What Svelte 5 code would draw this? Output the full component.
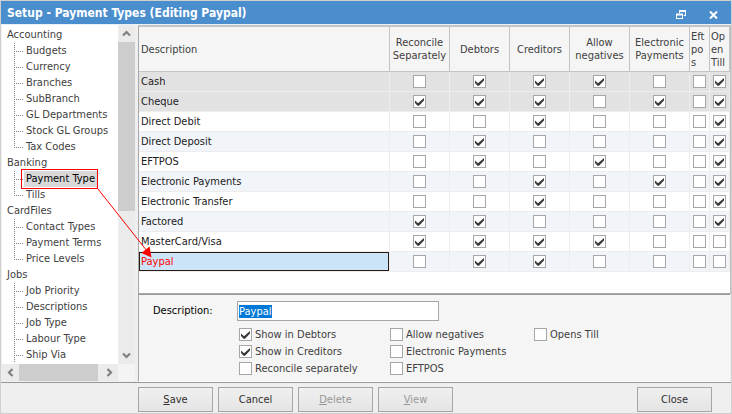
<script>
  import { onMount } from 'svelte';

  const tree = [
    { name: 'Accounting', items: ['Budgets', 'Currency', 'Branches', 'SubBranch', 'GL Departments', 'Stock GL Groups', 'Tax Codes'] },
    { name: 'Banking', items: ['Payment Type', 'Tills'] },
    { name: 'CardFiles', items: ['Contact Types', 'Payment Terms', 'Price Levels'] },
    { name: 'Jobs', more: true, items: ['Job Priority', 'Descriptions', 'Job Type', 'Labour Type', 'Ship Via'] }
  ];
  const columns = ['Reconcile Separately', 'Debtors', 'Creditors', 'Allow negatives', 'Electronic Payments', 'Eft pos', 'Open Till'];
  const rows = $state([
    { name: 'Cash', system: true, flags: [false, true, true, true, false, false, true] },
    { name: 'Cheque', system: true, flags: [true, true, true, false, true, false, true] },
    { name: 'Direct Debit', flags: [false, false, true, false, false, false, true] },
    { name: 'Direct Deposit', flags: [false, true, false, false, false, false, true] },
    { name: 'EFTPOS', flags: [false, true, false, true, false, false, true] },
    { name: 'Electronic Payments', flags: [false, false, true, false, true, false, true] },
    { name: 'Electronic Transfer', flags: [false, false, true, false, false, false, true] },
    { name: 'Factored', flags: [true, true, false, false, false, false, true] },
    { name: 'MasterCard/Visa', flags: [true, true, true, true, false, false, false] },
    { name: 'Paypal', flags: [false, true, true, false, false, false, false] }
  ]);
  const options = $state([
    { label: 'Show in Debtors', on: true },
    { label: 'Allow negatives', on: false },
    { label: 'Opens Till', on: false },
    { label: 'Show in Creditors', on: true },
    { label: 'Electronic Payments', on: false, last: true },
    { label: 'Reconcile separately', on: false },
    { label: 'EFTPOS', on: false }
  ]);
  let selected = $state('Paypal');
  let description = $state('Paypal');
  let field;
  onMount(() => {
    field.focus();
    field.select();
  });
</script>

{#snippet chevron(d)}
  <svg width="9" height="9" viewBox="0 0 9 9" aria-hidden="true"><path {d} fill="none" stroke="#808080" stroke-width="2.2" /></svg>
{/snippet}

<div class="window">
  <header>
    <h1>Setup - Payment Types (Editing Paypal)</h1>
    <button class="tool" aria-label="Restore">
      <svg width="10" height="9" viewBox="0 0 10 9"><path d="M3 0H10V6H7.700V5H9V2H4V3H3ZM0 3.500H7V9H0ZM1 5.500V8H6V5.500Z" fill="#fff" fill-rule="evenodd" /></svg>
    </button>
    <button class="tool" aria-label="Close window">
      <svg width="9" height="8" viewBox="0 0 9 8"><path d="M1 .5L8 7.5M8 .5L1 7.5" stroke="#fff" stroke-width="2" /></svg>
    </button>
  </header>

  <main>
    <nav>
      <div class="tree-row">
        <div class="tree">
          {#each tree as group}
            <div class="group">{group.name}</div>
            <ul class:more={group.more}>
              {#each group.items as item}
                <li><a href="#top" class:current={item === 'Payment Type'}>{item}</a></li>
              {/each}
            </ul>
          {/each}
        </div>
        <div class="vbar">
          <button aria-label="Scroll up">{@render chevron('M1 6.5L4.5 3L8 6.5')}</button>
          <div class="thumb"></div>
          <div class="rest"></div>
          <button aria-label="Scroll down">{@render chevron('M1 2.5L4.5 6L8 2.5')}</button>
        </div>
      </div>
      <div class="hbar">
        <button aria-label="Scroll left">{@render chevron('M6.5 1L3 4.5L6.5 8')}</button>
        <div class="thumb"></div>
        <button aria-label="Scroll right">{@render chevron('M2.5 1L6 4.5L2.5 8')}</button>
        <div class="corner"></div>
      </div>
    </nav>

    <div class="content">
      <div class="grid">
        <table>
          <colgroup>
            <col />
            {#each columns as c, i}<col class={i > 4 ? 'narrow' : 'wide'} />{/each}
          </colgroup>
          <thead>
            <tr>
              <th class="desc" scope="col">Description</th>
              {#each columns as c, i}<th scope="col" class:tight={i > 4}>{c}</th>{/each}
            </tr>
          </thead>
          <tbody>
            {#each rows as row}
              <tr class:system={row.system} class:selected={row.name === selected}>
                <td class="desc">{row.name}</td>
                {#each columns as c, i}
                  <td><input type="checkbox" aria-label={`${row.name}: ${c}`} bind:checked={row.flags[i]} /></td>
                {/each}
              </tr>
            {/each}
          </tbody>
        </table>
      </div>

      <form>
        <div class="field">
          <label for="description">Description:</label>
          <input id="description" type="text" bind:this={field} bind:value={description} />
        </div>
        <div class="options">
          {#each options as o}
            <label class:last={o.last}><input type="checkbox" bind:checked={o.on} />{o.label}</label>
          {/each}
        </div>
      </form>
    </div>

    <svg class="callout" width="160" height="240" viewBox="0 0 160 240" aria-hidden="true">
      <rect x="21.5" y="144.5" width="76" height="19" fill="none" stroke="#f00" />
      <path d="M98 164L147 226" stroke="#f00" stroke-width="1" />
      <path d="M151.500 232.500L149.500 221.500L141.500 228Z" fill="#f00" />
    </svg>
  </main>

  <footer>
    <button><u>S</u>ave</button>
    <button>Cancel</button>
    <button disabled><u>D</u>elete</button>
    <button disabled><u>V</u>iew</button>
    <button class="close">Close</button>
  </footer>
</div>

<style>
  :global(body) {
    background: #efefef;
  }
  .window {
    box-sizing: border-box;
    min-width: 640px;
    height: 100vh;
    display: flex;
    flex-direction: column;
    border: 1px solid #cfcfcf;
    background: #efefef;
    color: #404040;
    font: 11px/16px Tahoma, 'DejaVu Sans Condensed', 'DejaVu Sans', sans-serif;
  }
  button, input {
    font: inherit;
    color: inherit;
  }
  header {
    height: 23px;
    flex: none;
    display: flex;
    align-items: center;
    gap: 16px;
    padding: 0 10px 0 6px;
    background: #4b8ecd;
    border-bottom: 1px solid #e8f0f8;
    color: #fff;
  }
  h1 {
    flex: 1;
    margin: 0;
    font-size: 12px;
    line-height: 24px;
    white-space: nowrap;
  }
  .tool {
    width: 16px;
    height: 16px;
    margin-top: 4px;
    padding: 0;
    display: grid;
    place-items: center;
    border: 0;
    background: none;
  }
  main {
    position: relative;
    flex: 1;
    min-height: 0;
    display: flex;
    gap: 3px;
    padding-left: 1px;
  }
  nav {
    width: 133px;
    flex: none;
    display: flex;
    flex-direction: column;
    margin-bottom: 1px;
    background: #fff;
  }
  .tree-row {
    flex: 1;
    min-height: 0;
    display: flex;
  }
  .tree {
    flex: 1;
    overflow: hidden;
    padding: 2px 0 0 5px;
    white-space: nowrap;
  }
  ul {
    margin: 0;
    padding: 0;
    list-style: none;
  }
  li {
    height: 16px;
    padding-left: 10px;
    margin-left: 7px;
    background:
      repeating-linear-gradient(180deg, #808080 0 1px, transparent 1px 2px) 0 0 / 1px 100% no-repeat,
      repeating-linear-gradient(90deg, #808080 0 1px, transparent 1px 2px) 0 8px / 9px 1px no-repeat;
  }
  li:last-child {
    background-size: 1px 9px, 9px 1px;
  }
  .more li:last-child {
    background-size: 1px 100%, 9px 1px;
  }
  .more {
    padding-bottom: 16px;
  }
  a {
    display: inline-block;
    padding: 0 2px;
    color: inherit;
    text-decoration: none;
  }
  a.current {
    background: #d9d9d9;
    color: #000;
  }
  .vbar, .hbar {
    display: flex;
    background: #ebebeb;
  }
  .vbar {
    width: 17px;
    flex-direction: column;
  }
  .hbar {
    height: 17px;
    flex: none;
  }
  .vbar button, .hbar button {
    width: 17px;
    height: 17px;
    flex: none;
    display: grid;
    place-items: center;
    padding: 0;
    border: 0;
    background: #ebebeb;
  }
  .corner {
    width: 17px;
    flex: none;
    background: #f4f4f4;
  }
  .thumb {
    background: #cdcdcd;
  }
  .vbar .thumb {
    flex: 1;
  }
  .rest {
    flex: 0 0 40%;
  }
  .hbar .thumb {
    flex: 1;
    margin-right: 3px;
  }
  .content {
    flex: 1;
    min-width: 0;
    display: flex;
    flex-direction: column;
  }
  .grid {
    flex: 1;
    border: 1px solid #a8a8a8;
    border-top: 2px solid #c4c4c4;
    border-right-color: #c0c0c0;
    background: #fff;
  }
  table {
    width: 100%;
    table-layout: fixed;
    border-collapse: separate;
    border-spacing: 0;
  }
  .wide {
    width: 60px;
  }
  .narrow {
    width: 20px;
  }
  th {
    height: 43px;
    padding: 0 2px;
    border-right: 1px solid #c4c4c4;
    border-bottom: 1px solid #c4c4c4;
    background: #f5f5f5;
    font-weight: normal;
    line-height: 13px;
  }
  th.tight {
    padding: 0 1px;
    text-align: left;
    word-break: break-all;
  }
  td {
    height: 19px;
    padding: 0;
    border-right: 1px solid #ededed;
    border-bottom: 1px solid #ededed;
    text-align: center;
    line-height: 16px;
  }
  .desc {
    padding: 1px 0 0 2px;
    text-align: left;
  }
  td.desc {
    height: 18px;
    color: #202020;
  }
  tbody tr:nth-child(even) {
    background: #f1f5fa;
  }
  tbody tr.system {
    background: #e2e2e2;
  }
  .selected td.desc {
    background: #cce4f8;
    box-shadow: inset 0 0 0 1px #2a1a14;
    color: #f00;
  }
  input[type='checkbox'] {
    appearance: none;
    box-sizing: border-box;
    width: 13px;
    height: 13px;
    flex: none;
    margin: 0;
    border: 1px solid #a6a6a6;
    background: #fff;
    vertical-align: middle;
  }
  td input[type='checkbox'] {
    display: block;
    margin: 0 auto;
  }
  input[type='checkbox']:checked {
    background-image: url("data:image/svg+xml,%3Csvg xmlns='http://www.w3.org/2000/svg' viewBox='0 0 11 11'%3E%3Cpath d='M1 4.500L4 7.200L10 2V4.500L5 9.700H3.500L1 7Z' fill='%23383838'/%3E%3C/svg%3E");
  }
  form {
    flex: none;
    padding: 6px 10px 4px 14px;
    border-top: 1px solid #989898;
    border-left: 1px solid #a8a8a8;
    border-bottom: 1px solid #fff;
    margin-right: 1px;
    background: #f5f5f5;
  }
  .field {
    display: flex;
    align-items: center;
  }
  .field label {
    width: 84px;
    color: #000;
  }
  .field input {
    box-sizing: border-box;
    width: 202px;
    height: 20px;
    padding: 0 1px;
    border: 1px solid #a6a6a6;
    outline: 0;
    background: #fff;
    line-height: 14px;
  }
  .field input::selection {
    background: #0078d7;
    color: #fff;
  }
  .options {
    display: grid;
    grid-template-columns: 151px 144px 1fr;
    grid-auto-rows: 17px;
    padding: 5px 0 0 86px;
  }
  .options label {
    display: flex;
    align-items: center;
    gap: 3px;
    white-space: nowrap;
  }
  .options .last {
    grid-column: 2 / 4;
  }
  .callout {
    position: absolute;
    left: -1px;
    top: 0;
    pointer-events: none;
  }
  footer {
    flex: none;
    display: flex;
    gap: 5px;
    padding: 4px 19px 1px 137px;
    border-top: 1px solid #989898;
  }
  footer button {
    width: 75px;
    height: 25px;
    padding: 0;
    border: 1px solid #a6a6a6;
    background: linear-gradient(#f0f0f0, #e4e4e4);
    color: #303030;
  }
  footer button:disabled {
    color: #989898;
  }
  .close {
    margin-left: auto;
  }
</style>
